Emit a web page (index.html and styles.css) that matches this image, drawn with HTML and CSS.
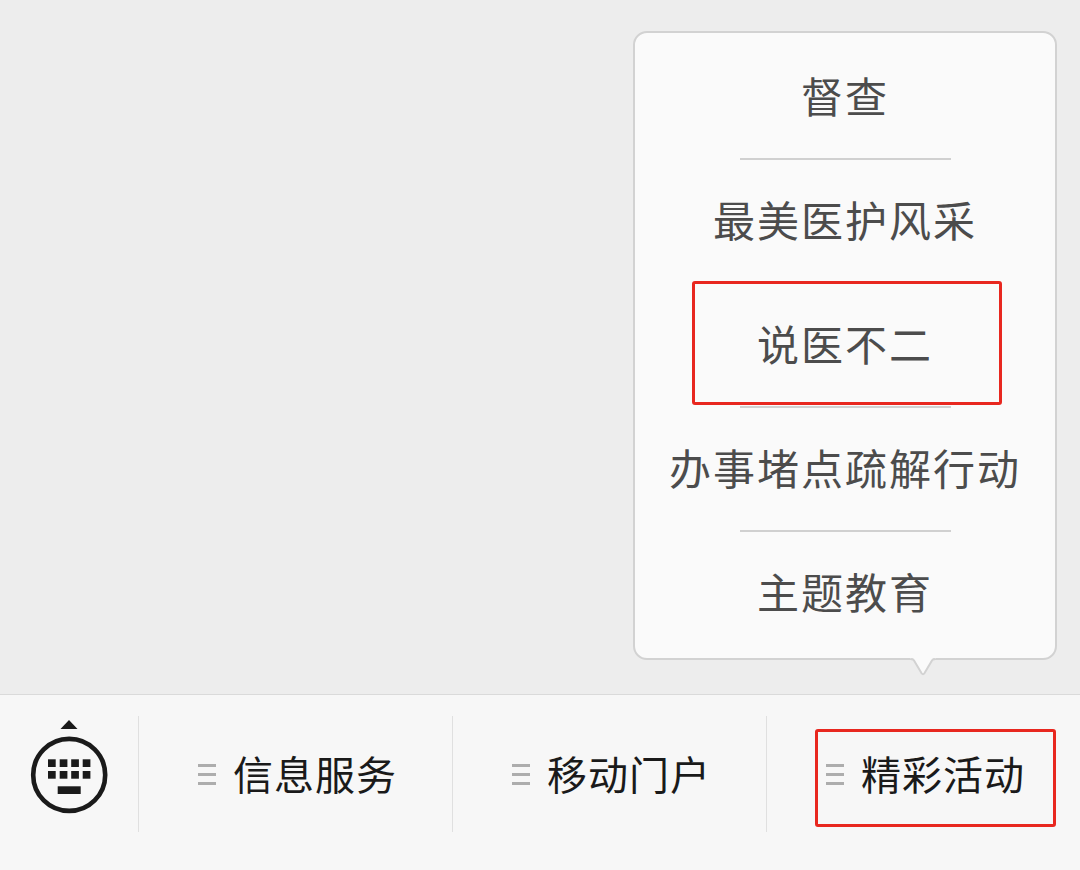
FILE: index.html
```html
<!DOCTYPE html>
<html lang="zh-CN">
<head>
  <meta charset="UTF-8">
  <title>精彩活动</title>
  <link rel="stylesheet" href="styles.css">
</head>
<body>
  <div class="chat">
    <div class="popup">
      <div class="popup-item">督查</div>
      <div class="popup-item">最美医护风采</div>
      <div class="popup-item">说医不二<span class="mark mark-item"></span></div>
      <div class="popup-item">办事堵点疏解行动</div>
      <div class="popup-item">主题教育</div>
      <svg class="popup-arrow" width="26" height="20" viewBox="0 0 26 20">
        <path d="M0 0H26V1.2H24Q22.800 1.200 22 2.500L14.400 15.500Q13 17.800 11.600 15.500L4 2.500Q3.200 1.200 2 1.200H0Z" fill="#fafafa"/>
        <path d="M1 2.200H2Q3.200 2.200 4 3.500L11.600 16.300Q13 18.300 14.400 16.300L22 3.500Q22.800 2.200 24 2.200H25" fill="none" stroke="#d2d2d2" stroke-width="2"/>
      </svg>
    </div>
  </div>

  <div class="menu-bar">
    <div class="keyboard">
      <svg width="80" height="96" viewBox="0 0 80 96">
        <path d="M40 2L48.500 11H31.500Z" fill="#1a1a1a"/>
        <circle cx="40.200" cy="56.900" r="36" fill="none" stroke="#1a1a1a" stroke-width="4.600"/>
        <g fill="#1a1a1a">
          <rect x="19" y="41.300" width="7.700" height="7.700"/>
          <rect x="30.700" y="41.300" width="7.700" height="7.700"/>
          <rect x="42.200" y="41.300" width="7.700" height="7.700"/>
          <rect x="53.700" y="41.300" width="7.700" height="7.700"/>
          <rect x="19" y="53" width="7.700" height="7.700"/>
          <rect x="30.700" y="53" width="7.700" height="7.700"/>
          <rect x="42.200" y="53" width="7.700" height="7.700"/>
          <rect x="53.700" y="53" width="7.700" height="7.700"/>
          <rect x="28.700" y="68.300" width="23" height="7.700"/>
        </g>
      </svg>
    </div>
    <div class="menu-item"><span class="lines"><i></i><i></i><i></i></span><span class="menu-text">信息服务</span></div>
    <div class="menu-item"><span class="lines"><i></i><i></i><i></i></span><span class="menu-text">移动门户</span></div>
    <div class="menu-item"><span class="lines"><i></i><i></i><i></i></span><span class="menu-text">精彩活动</span><span class="mark mark-menu"></span></div>
  </div>
</body>
</html>
```
FILE: styles.css
```css
* {
  box-sizing: border-box;
}
body {
  margin: 0;
  height: 870px;
  display: flex;
  flex-direction: column;
  background: #ededed;
  font-family: "Noto Sans CJK SC", sans-serif;
  overflow: hidden;
}
.chat {
  height: 694px;
  display: flex;
  justify-content: flex-end;
  align-items: flex-start;
  padding: 31px 23px 0 0;
}
.popup {
  position: relative;
  width: 424px;
  height: 629px;
  padding-top: 3px;
  background: #fafafa;
  border: 2px solid #d2d2d2;
  border-radius: 14px;
}
.popup-item {
  position: relative;
  height: 124px;
  line-height: 118px;
  text-align: center;
  font-size: 42px;
  letter-spacing: 2px;
  color: #4c4c4c;
  white-space: nowrap;
}
.popup-item + .popup-item::before {
  content: "";
  position: absolute;
  top: -2px;
  left: 105px;
  width: 211px;
  height: 2px;
  background: #d0d0d0;
}
.popup-arrow {
  position: absolute;
  left: 275px;
  bottom: -19px;
}
.mark {
  position: absolute;
  border: 3px solid #e8271f;
  border-radius: 3px;
  z-index: 1;
}
.mark-item {
  left: 57px;
  top: -3px;
  width: 310px;
  height: 124px;
}
.menu-bar {
  display: flex;
  height: 176px;
  padding-top: 21px;
  background: #f7f7f7;
  border-top: 1px solid #dadada;
}
.keyboard {
  width: 138px;
  height: 116px;
  padding: 2px 0 0 29px;
}
.menu-item {
  position: relative;
  display: flex;
  align-items: center;
  width: 314px;
  height: 116px;
  padding-left: 59px;
  border-left: 1px solid #e0e0e0;
  font-size: 40px;
  letter-spacing: 1px;
  color: #1a1a1a;
  white-space: nowrap;
}
.lines {
  display: flex;
  flex-direction: column;
  gap: 6px;
  width: 18px;
  margin-right: 17px;
}
.lines i {
  height: 3px;
  background: #adadad;
}
.menu-text {
  margin-bottom: 3px;
}
.mark-menu {
  left: 48px;
  top: 13px;
  width: 241px;
  height: 98px;
}
```
